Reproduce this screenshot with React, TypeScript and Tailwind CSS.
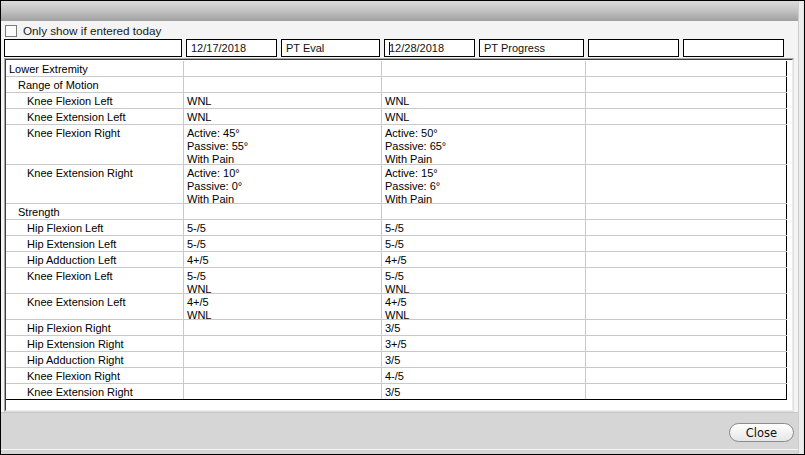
import React from 'react'

type Row = {
    level: number
    label: string
    a?: string[]
    b?: string[]
    h: string
}

const rows: Row[] = [
    { level: 0, label: 'Lower Extremity', h: 'h-[15px]' },
    { level: 1, label: 'Range of Motion', h: 'h-[15px]' },
    { level: 2, label: 'Knee Flexion Left', a: ['WNL'], b: ['WNL'], h: 'h-[15px]' },
    { level: 2, label: 'Knee Extension Left', a: ['WNL'], b: ['WNL'], h: 'h-[15px]' },
    {
        level: 2,
        label: 'Knee Flexion Right',
        a: ['Active: 45°', 'Passive: 55°', 'With Pain'],
        b: ['Active: 50°', 'Passive: 65°', 'With Pain'],
        h: 'h-[39px]'
    },
    {
        level: 2,
        label: 'Knee Extension Right',
        a: ['Active: 10°', 'Passive: 0°', 'With Pain'],
        b: ['Active: 15°', 'Passive: 6°', 'With Pain'],
        h: 'h-[38px]'
    },
    { level: 1, label: 'Strength', h: 'h-[15px]' },
    { level: 2, label: 'Hip Flexion Left', a: ['5-/5'], b: ['5-/5'], h: 'h-[15px]' },
    { level: 2, label: 'Hip Extension Left', a: ['5-/5'], b: ['5-/5'], h: 'h-[15px]' },
    { level: 2, label: 'Hip Adduction Left', a: ['4+/5'], b: ['4+/5'], h: 'h-[15px]' },
    { level: 2, label: 'Knee Flexion Left', a: ['5-/5', 'WNL'], b: ['5-/5', 'WNL'], h: 'h-[25px]' },
    { level: 2, label: 'Knee Extension Left', a: ['4+/5', 'WNL'], b: ['4+/5', 'WNL'], h: 'h-[25px]' },
    { level: 2, label: 'Hip Flexion Right', b: ['3/5'], h: 'h-[15px]' },
    { level: 2, label: 'Hip Extension Right', b: ['3+/5'], h: 'h-[15px]' },
    { level: 2, label: 'Hip Adduction Right', b: ['3/5'], h: 'h-[15px]' },
    { level: 2, label: 'Knee Flexion Right', b: ['4-/5'], h: 'h-[15px]' },
    { level: 2, label: 'Knee Extension Right', b: ['3/5'], h: 'h-[15px]' }
]

const indent = ['pl-[3px]', 'pl-[12px]', 'pl-[21px]']

function Cell({ lines, className }: { lines?: string[]; className: string }) {
    return (
        <div className={`pt-[2px] pl-[3px] leading-[13px] ${className}`}>
            {lines?.map((l, i) => (
                <div key={i} className="whitespace-nowrap">{l}</div>
            ))}
        </div>
    )
}

function Field({ text, w, caret }: { text?: string; w: string; caret?: boolean }) {
    return (
        <div className={`h-[18px] ${w} border border-black bg-white pl-[4px] text-[11px] leading-[16px] text-[#111] whitespace-nowrap`}>
            {caret && <span className="inline-block w-px h-[13px] bg-black align-middle -mr-px -mt-[2px]" />}
            {text}
        </div>
    )
}

export default function App() {
    return (
        <div className="flex w-[805px] h-[455px] border border-black bg-[#f4f4f4] font-['Liberation_Sans',Arial,sans-serif] text-black overflow-hidden">
            <div className="flex flex-col w-[797px]">
                {/* title bar */}
                <div className="h-[20px] bg-gradient-to-b from-[#dcdcdc] via-[#c2c2c2] to-[#a0a0a0]" />

                <div className="flex h-[18px] items-center pl-[4px] pt-[1px]">
                    <div className="w-[12px] h-[12px] border border-[#7c7c7c] bg-[#fbfbfb]" />
                    <span className="ml-[6px] text-[11.7px] text-[#1a1a1a]">Only show if entered today</span>
                </div>

                <div className="flex h-[18px] gap-[4px] pl-[3px]">
                    <Field w="w-[178px]" />
                    <Field w="w-[91px]" text="12/17/2018" />
                    <Field w="w-[99px]" text="PT Eval" />
                    <Field w="w-[91px]" text="12/28/2018" caret />
                    <Field w="w-[105px]" text="PT Progress" />
                    <Field w="w-[91px]" />
                    <Field w="w-[101px]" />
                </div>

                {/* results grid */}
                <div className="mt-[1px] ml-[3px] mr-[4px] h-[354px] border-l border-t border-[#a8a8a8] border-r-[#dedede] border-b-[#dedede] border-r border-b">
                    <div className="h-full border-l border-t border-[#3c3c3c] border-r border-b border-r-[#ececec] border-b-[#ececec] bg-white pt-px">
                        <div className="w-[781px] text-[11px]">
                            {rows.map((r, i) => (
                                <div
                                    key={i}
                                    className={`flex border-b ${i === rows.length - 1 ? 'border-black' : 'border-[#c9c9c9]'}`}
                                >
                                    <div className={`w-[178px] ${r.h} pt-[2px] leading-[13px] whitespace-nowrap border-r border-[#c9c9c9] ${indent[r.level]}`}>
                                        {r.label}
                                    </div>
                                    <Cell lines={r.a} className={`w-[198px] ${r.h} border-r border-[#c9c9c9]`} />
                                    <Cell lines={r.b} className={`w-[204px] ${r.h} border-r border-[#c9c9c9]`} />
                                    <Cell className={`w-[201px] ${r.h} border-r border-black`} />
                                </div>
                            ))}
                        </div>
                    </div>
                </div>

                {/* footer */}
                <div className="flex h-[37px] justify-end items-start pt-[10px] pr-[4px] bg-[#d6d6d6] border-t border-[#c6c6c6]">
                    <button
                        type="button"
                        className="w-[65px] h-[19px] rounded-full border border-[#8c8c8c] bg-gradient-to-b from-white to-[#e6e6e6] font-['DejaVu_Sans',sans-serif] text-[11.5px] leading-[16px] text-[#111]"
                    >
                        Close
                    </button>
                </div>
                <div className="h-px bg-[#f6f6f6]" />
                <div className="flex-1 bg-[#d6d6d6]" />
            </div>
            <div className="flex-1 border-l border-[#cdcdcd] bg-[#ededed] border-r border-r-[#e2e2e2]" />
        </div>
    )
}
